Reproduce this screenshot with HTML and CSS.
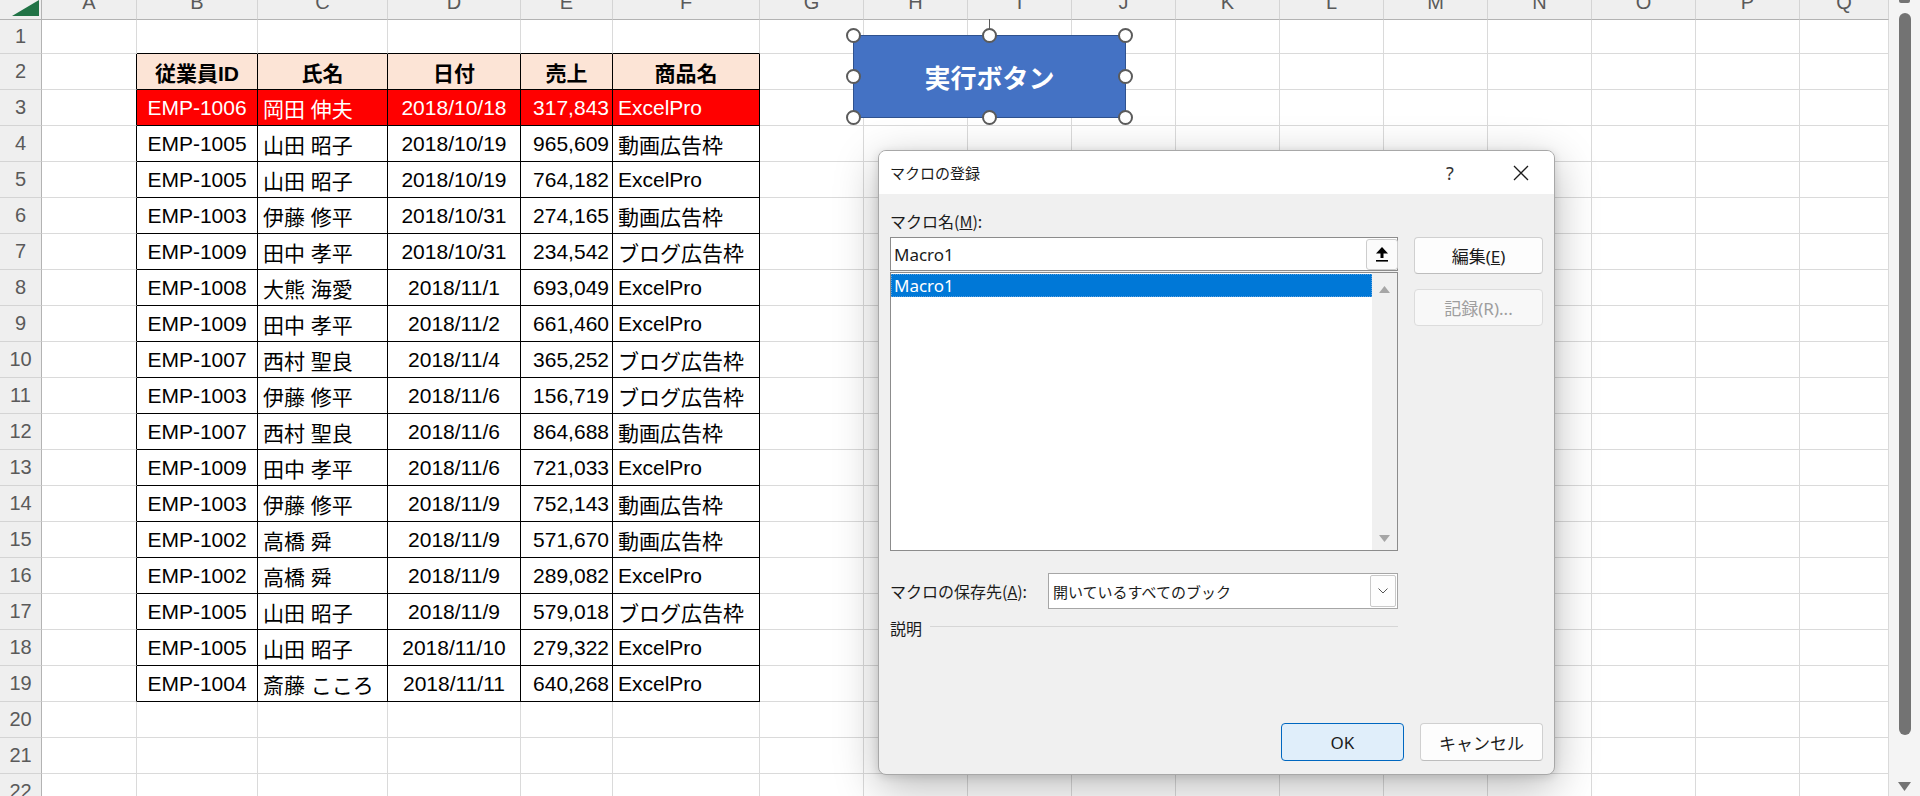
FILE: index.html
```html
<!DOCTYPE html>
<html lang="ja">
<head>
<meta charset="utf-8">
<title>Excel - マクロの登録</title>
<link rel="stylesheet" href="styles.css">
</head>
<body>
<div class="app">
  <div class="sheet">
    <div class="row hdr">
      <div class="corner"><svg width="42" height="19" viewBox="0 0 42 19"><polygon points="12,16 39,16 39,0" fill="#217346"/></svg></div>
      <div>A</div><div>B</div><div>C</div><div>D</div><div>E</div><div>F</div><div>G</div><div>H</div><div>I</div><div>J</div><div>K</div><div>L</div><div>M</div><div>N</div><div>O</div><div>P</div><div>Q</div>
    </div>
    <div class="row r1"><div class="rh">1</div><div></div><div class="tt"></div><div class="tt"></div><div class="tt"></div><div class="tt"></div><div class="tt"></div><div></div><div></div><div></div><div></div><div></div><div></div><div></div><div></div><div></div><div></div><div></div></div>
    <div class="row"><div class="rh">2</div><div class="tl"></div><div class="t th">従業員ID</div><div class="t th">氏名</div><div class="t th">日付</div><div class="t th">売上</div><div class="t th">商品名</div><div></div><div></div><div></div><div></div><div></div><div></div><div></div><div></div><div></div><div></div><div></div></div>
    <div class="row hl"><div class="rh">3</div><div class="tl"></div><div class="t m">EMP-1006</div><div class="t">岡田 伸夫</div><div class="t m">2018/10/18</div><div class="t r">317,843</div><div class="t">ExcelPro</div><div></div><div></div><div></div><div></div><div></div><div></div><div></div><div></div><div></div><div></div><div></div></div>
    <div class="row"><div class="rh">4</div><div class="tl"></div><div class="t m">EMP-1005</div><div class="t">山田 昭子</div><div class="t m">2018/10/19</div><div class="t r">965,609</div><div class="t">動画広告枠</div><div></div><div></div><div></div><div></div><div></div><div></div><div></div><div></div><div></div><div></div><div></div></div>
    <div class="row"><div class="rh">5</div><div class="tl"></div><div class="t m">EMP-1005</div><div class="t">山田 昭子</div><div class="t m">2018/10/19</div><div class="t r">764,182</div><div class="t">ExcelPro</div><div></div><div></div><div></div><div></div><div></div><div></div><div></div><div></div><div></div><div></div><div></div></div>
    <div class="row"><div class="rh">6</div><div class="tl"></div><div class="t m">EMP-1003</div><div class="t">伊藤 修平</div><div class="t m">2018/10/31</div><div class="t r">274,165</div><div class="t">動画広告枠</div><div></div><div></div><div></div><div></div><div></div><div></div><div></div><div></div><div></div><div></div><div></div></div>
    <div class="row"><div class="rh">7</div><div class="tl"></div><div class="t m">EMP-1009</div><div class="t">田中 孝平</div><div class="t m">2018/10/31</div><div class="t r">234,542</div><div class="t">ブログ広告枠</div><div></div><div></div><div></div><div></div><div></div><div></div><div></div><div></div><div></div><div></div><div></div></div>
    <div class="row"><div class="rh">8</div><div class="tl"></div><div class="t m">EMP-1008</div><div class="t">大熊 海愛</div><div class="t m">2018/11/1</div><div class="t r">693,049</div><div class="t">ExcelPro</div><div></div><div></div><div></div><div></div><div></div><div></div><div></div><div></div><div></div><div></div><div></div></div>
    <div class="row"><div class="rh">9</div><div class="tl"></div><div class="t m">EMP-1009</div><div class="t">田中 孝平</div><div class="t m">2018/11/2</div><div class="t r">661,460</div><div class="t">ExcelPro</div><div></div><div></div><div></div><div></div><div></div><div></div><div></div><div></div><div></div><div></div><div></div></div>
    <div class="row"><div class="rh">10</div><div class="tl"></div><div class="t m">EMP-1007</div><div class="t">西村 聖良</div><div class="t m">2018/11/4</div><div class="t r">365,252</div><div class="t">ブログ広告枠</div><div></div><div></div><div></div><div></div><div></div><div></div><div></div><div></div><div></div><div></div><div></div></div>
    <div class="row"><div class="rh">11</div><div class="tl"></div><div class="t m">EMP-1003</div><div class="t">伊藤 修平</div><div class="t m">2018/11/6</div><div class="t r">156,719</div><div class="t">ブログ広告枠</div><div></div><div></div><div></div><div></div><div></div><div></div><div></div><div></div><div></div><div></div><div></div></div>
    <div class="row"><div class="rh">12</div><div class="tl"></div><div class="t m">EMP-1007</div><div class="t">西村 聖良</div><div class="t m">2018/11/6</div><div class="t r">864,688</div><div class="t">動画広告枠</div><div></div><div></div><div></div><div></div><div></div><div></div><div></div><div></div><div></div><div></div><div></div></div>
    <div class="row"><div class="rh">13</div><div class="tl"></div><div class="t m">EMP-1009</div><div class="t">田中 孝平</div><div class="t m">2018/11/6</div><div class="t r">721,033</div><div class="t">ExcelPro</div><div></div><div></div><div></div><div></div><div></div><div></div><div></div><div></div><div></div><div></div><div></div></div>
    <div class="row"><div class="rh">14</div><div class="tl"></div><div class="t m">EMP-1003</div><div class="t">伊藤 修平</div><div class="t m">2018/11/9</div><div class="t r">752,143</div><div class="t">動画広告枠</div><div></div><div></div><div></div><div></div><div></div><div></div><div></div><div></div><div></div><div></div><div></div></div>
    <div class="row"><div class="rh">15</div><div class="tl"></div><div class="t m">EMP-1002</div><div class="t">高橋 舜</div><div class="t m">2018/11/9</div><div class="t r">571,670</div><div class="t">動画広告枠</div><div></div><div></div><div></div><div></div><div></div><div></div><div></div><div></div><div></div><div></div><div></div></div>
    <div class="row"><div class="rh">16</div><div class="tl"></div><div class="t m">EMP-1002</div><div class="t">高橋 舜</div><div class="t m">2018/11/9</div><div class="t r">289,082</div><div class="t">ExcelPro</div><div></div><div></div><div></div><div></div><div></div><div></div><div></div><div></div><div></div><div></div><div></div></div>
    <div class="row"><div class="rh">17</div><div class="tl"></div><div class="t m">EMP-1005</div><div class="t">山田 昭子</div><div class="t m">2018/11/9</div><div class="t r">579,018</div><div class="t">ブログ広告枠</div><div></div><div></div><div></div><div></div><div></div><div></div><div></div><div></div><div></div><div></div><div></div></div>
    <div class="row"><div class="rh">18</div><div class="tl"></div><div class="t m">EMP-1005</div><div class="t">山田 昭子</div><div class="t m">2018/11/10</div><div class="t r">279,322</div><div class="t">ExcelPro</div><div></div><div></div><div></div><div></div><div></div><div></div><div></div><div></div><div></div><div></div><div></div></div>
    <div class="row"><div class="rh">19</div><div class="tl"></div><div class="t m">EMP-1004</div><div class="t">斎藤 こころ</div><div class="t m">2018/11/11</div><div class="t r">640,268</div><div class="t">ExcelPro</div><div></div><div></div><div></div><div></div><div></div><div></div><div></div><div></div><div></div><div></div><div></div></div>
    <div class="row"><div class="rh">20</div><div></div><div></div><div></div><div></div><div></div><div></div><div></div><div></div><div></div><div></div><div></div><div></div><div></div><div></div><div></div><div></div><div></div></div>
    <div class="row"><div class="rh">21</div><div></div><div></div><div></div><div></div><div></div><div></div><div></div><div></div><div></div><div></div><div></div><div></div><div></div><div></div><div></div><div></div><div></div></div>
    <div class="row"><div class="rh">22</div><div></div><div></div><div></div><div></div><div></div><div></div><div></div><div></div><div></div><div></div><div></div><div></div><div></div><div></div><div></div><div></div><div></div></div>
  </div>
  <div class="vscroll">
    <div class="vs-stub"></div>
    <div class="vs-thumb"></div>
    <svg class="vs-down" width="13" height="9" viewBox="0 0 13 9"><polygon points="0,0 13,0 6.5,9" fill="#747474"/></svg>
  </div>

  <div class="shape">実行ボタン</div>
  <div class="rot-line"></div>
  <div class="handle h-tl"></div>
  <div class="handle h-tm"></div>
  <div class="handle h-tr"></div>
  <div class="handle h-ml"></div>
  <div class="handle h-mr"></div>
  <div class="handle h-bl"></div>
  <div class="handle h-bm"></div>
  <div class="handle h-br"></div>

  <div class="dialog">
    <div class="dlg-title">
      <span class="dlg-caption">マクロの登録</span>
      <span class="dlg-help">?</span>
      <span class="dlg-close"><svg width="16" height="16" viewBox="0 0 16 16"><path d="M1 1 L15 15 M15 1 L1 15" stroke="#1b1b1b" stroke-width="1.3" fill="none"/></svg></span>
    </div>
    <div class="dlg-body">
      <div class="dlg-main">
        <div class="dlg-left">
          <div class="lbl">マクロ名(<u>M</u>):</div>
          <div class="namebox">
            <span class="namebox-text">Macro1</span>
            <span class="upbtn"><svg width="12" height="15" viewBox="0 0 12 15"><polygon points="0,6.5 12,6.5 6,0" fill="#000"/><rect x="4.5" y="6" width="3" height="5" fill="#000"/><rect x="0" y="13" width="12" height="1.6" fill="#000"/></svg></span>
          </div>
          <div class="listbox">
            <div class="list-items"><div class="list-item sel">Macro1</div></div>
            <div class="list-scroll">
              <svg width="11" height="7" viewBox="0 0 11 7"><polygon points="0,7 11,7 5.5,0" fill="#a6a6a6"/></svg>
              <svg width="11" height="7" viewBox="0 0 11 7"><polygon points="0,0 11,0 5.5,7" fill="#a6a6a6"/></svg>
            </div>
          </div>
          <div class="store-row">
            <span class="store-lbl">マクロの保存先(<u>A</u>):</span>
            <div class="combo">
              <span class="combo-text">開いているすべてのブック</span>
              <span class="combo-btn"><svg width="10" height="6" viewBox="0 0 10 6"><path d="M0.5 0.5 L5 5 L9.5 0.5" stroke="#555" stroke-width="1" fill="none"/></svg></span>
            </div>
          </div>
          <div class="desc-row"><span>説明</span><span class="rule"></span></div>
        </div>
        <div class="dlg-side">
          <button class="btn">編集(<u>E</u>)</button>
          <button class="btn disabled">記録(R)...</button>
        </div>
      </div>
      <div class="dlg-foot">
        <button class="btn ok">OK</button>
        <button class="btn">キャンセル</button>
      </div>
    </div>
  </div>
</div>
</body>
</html>
```
FILE: styles.css
```css
* { box-sizing: border-box; }
html, body { margin: 0; padding: 0; }
body {
  width: 1920px;
  height: 796px;
  overflow: hidden;
  background: #fff;
  font-family: "Liberation Sans", "Noto Sans CJK JP", sans-serif;
}
.app {
  position: relative;
  display: flex;
  width: 1920px;
  height: 796px;
  overflow: hidden;
}

/* ---------- sheet ---------- */
.sheet {
  width: 1889px;
  display: flex;
  flex-direction: column;
  flex: none;
}
.row {
  display: grid;
  grid-template-columns: 42px 95px 121px 130px 133px 92px 147px repeat(10, 104px) 89px;
  height: 36px;
  flex: none;
}
.row > div {
  border-right: 1px solid #dadada;
  border-bottom: 1px solid #dadada;
  display: flex;
  align-items: center;
  white-space: nowrap;
  font-size: 21px;
  color: #000;
  padding: 0 5px;
  overflow: hidden;
}
.row > .rh {
  background: #efefef;
  border-right-color: #b3b3b3;
  border-bottom-color: #d4d4d4;
  justify-content: center;
  color: #5a5a5a;
  font-size: 20px;
  padding: 0;
}
.hdr { height: 20px; }
.hdr > div {
  background: #efefef;
  border-bottom-color: #b3b3b3;
  border-right-color: #d4d4d4;
  display: block;
  text-align: center;
  line-height: 4px;
  font-size: 20px;
  color: #5a5a5a;
  padding: 0;
  overflow: visible;
}
.hdr > .corner {
  border-right-color: #b3b3b3;
  line-height: 0;
}
.r1 { height: 34px; }
.row > .tt { border-bottom-color: #000; }
.row > .tl { border-right-color: #000; }
.row > .t { border-right-color: #000; border-bottom-color: #000; }
.row > .m { justify-content: center; }
.row > .r { justify-content: flex-end; padding-right: 3px; }
.row > .th {
  background: #fce4d6;
  font-weight: bold;
  justify-content: center;
}
.hl > .t { background: #ff0000; color: #fff; }

/* ---------- vertical scrollbar ---------- */
.vscroll {
  width: 31px;
  flex: none;
  background: #f4f4f4;
  display: flex;
  flex-direction: column;
  align-items: center;
}
.vs-stub {
  width: 11px;
  height: 3px;
  background: #747474;
  border-radius: 0 0 2px 2px;
}
.vs-thumb {
  width: 12px;
  height: 722px;
  margin-top: 10px;
  background: #737373;
  border-radius: 6px;
}
.vs-down { margin-top: 47px; }

/* ---------- shape ---------- */
.shape {
  position: absolute;
  left: 853px;
  top: 35px;
  width: 273px;
  height: 83px;
  background: #4472c4;
  border: 1px solid #2f528f;
  display: flex;
  align-items: center;
  justify-content: center;
  color: #fff;
  font-family: "Noto Sans CJK JP", sans-serif;
  font-weight: bold;
  font-size: 26px;
}
.rot-line {
  position: absolute;
  left: 989px;
  top: 19px;
  width: 1px;
  height: 10px;
  background: #5b5b5b;
}
.handle {
  position: absolute;
  width: 15px;
  height: 15px;
  border-radius: 50%;
  background: #fff;
  border: 2px solid #5b5b5b;
}
.h-tl { left: 846px; top: 28px; }
.h-tm { left: 982px; top: 28px; }
.h-tr { left: 1118px; top: 28px; }
.h-ml { left: 846px; top: 69px; }
.h-mr { left: 1118px; top: 69px; }
.h-bl { left: 846px; top: 110px; }
.h-bm { left: 982px; top: 110px; }
.h-br { left: 1118px; top: 110px; }

/* ---------- dialog ---------- */
.dialog {
  position: absolute;
  left: 878px;
  top: 150px;
  width: 677px;
  height: 625px;
  border: 1px solid #a8a8a8;
  border-radius: 8px;
  background: #f0f0f0;
  box-shadow: 0 12px 44px rgba(0, 0, 0, 0.28), 0 2px 8px rgba(0, 0, 0, 0.12);
  display: flex;
  flex-direction: column;
  font-family: "Noto Sans", "Noto Sans CJK JP", sans-serif;
  color: #1b1b1b;
  overflow: hidden;
}
.dlg-title {
  height: 43px;
  flex: none;
  background: #fff;
  display: flex;
  align-items: center;
  padding: 0 10px 0 11px;
}
.dlg-caption {
  flex: 1;
  font-family: "Noto Sans CJK JP", sans-serif;
  font-size: 15px;
}
.dlg-help {
  width: 30px;
  text-align: center;
  font-size: 18px;
  color: #333;
  margin-right: 33px;
}
.dlg-close {
  width: 46px;
  height: 43px;
  display: flex;
  align-items: center;
  justify-content: center;
}
.dlg-body {
  flex: 1;
  display: flex;
  flex-direction: column;
  padding: 0 11px 13px;
}
.dlg-main {
  display: flex;
  gap: 16px;
}
.dlg-left {
  width: 508px;
  display: flex;
  flex-direction: column;
}
.lbl {
  margin-top: 16px;
  height: 22px;
  line-height: 22px;
  font-family: "Noto Sans CJK JP", sans-serif;
  font-size: 16px;
}
.namebox {
  margin-top: 5px;
  height: 34px;
  background: #fff;
  border: 1px solid #8c8c8c;
  display: flex;
  align-items: center;
  justify-content: space-between;
}
.namebox-text {
  padding-left: 3px;
  font-size: 17px;
}
.upbtn {
  width: 32px;
  height: 31px;
  margin-right: -1px;
  background: #fbfbfb;
  border: 1px solid #cdcdcd;
  border-radius: 3px;
  display: flex;
  align-items: center;
  justify-content: center;
}
.listbox {
  height: 279px;
  margin-top: 1px;
  background: #fff;
  border: 1px solid #8c8c8c;
  display: flex;
}
.list-items {
  flex: 1;
  padding-top: 1px;
}
.list-item {
  height: 23px;
  line-height: 23px;
  padding-left: 3px;
  font-size: 17px;
}
.list-item.sel {
  background: #0078d7;
  color: #fff;
  outline: 1px dotted #5aa0e0;
  outline-offset: -1px;
}
.list-scroll {
  width: 25px;
  background: #f0f0f0;
  display: flex;
  flex-direction: column;
  align-items: center;
  justify-content: space-between;
  padding: 13px 0 8px;
}
.store-row {
  margin-top: 22px;
  height: 36px;
  display: flex;
  align-items: center;
}
.store-lbl {
  width: 158px;
  font-family: "Noto Sans CJK JP", sans-serif;
  font-size: 16px;
}
.combo {
  flex: 1;
  height: 36px;
  background: #fff;
  border: 1px solid #a6a6a6;
  display: flex;
  align-items: center;
  justify-content: space-between;
  padding: 0 1px 0 4px;
}
.combo-text {
  font-family: "Noto Sans CJK JP", sans-serif;
  font-size: 15px;
}
.combo-btn {
  width: 26px;
  height: 32px;
  border: 1px solid #c9c9c9;
  border-radius: 2px;
  background: #fdfdfd;
  display: flex;
  align-items: center;
  justify-content: center;
}
.desc-row {
  margin-top: 9px;
  height: 20px;
  display: flex;
  align-items: center;
  font-family: "Noto Sans CJK JP", sans-serif;
  font-size: 16px;
}
.rule {
  flex: 1;
  height: 1px;
  background: #d6d6d6;
  margin-left: 8px;
  margin-top: -3px;
}
.dlg-side {
  width: 129px;
  margin-top: 43px;
  display: flex;
  flex-direction: column;
  gap: 15px;
}
.btn {
  height: 37px;
  background: #fdfdfd;
  border: 1px solid #d0d0d0;
  border-bottom-color: #bdbdbd;
  border-radius: 4px;
  font-family: "Noto Sans", "Noto Sans CJK JP", sans-serif;
  font-size: 17px;
  color: #1b1b1b;
  padding: 0;
}
.btn.disabled {
  color: #9e9e9e;
  background: #f8f8f8;
  border-color: #dcdcdc;
}
.dlg-foot {
  margin-top: auto;
  display: flex;
  justify-content: flex-end;
  gap: 16px;
}
.dlg-foot .btn {
  width: 123px;
  height: 38px;
}
.dlg-foot .ok {
  background: #e0eefa;
  border: 1px solid #0067c0;
}
```
